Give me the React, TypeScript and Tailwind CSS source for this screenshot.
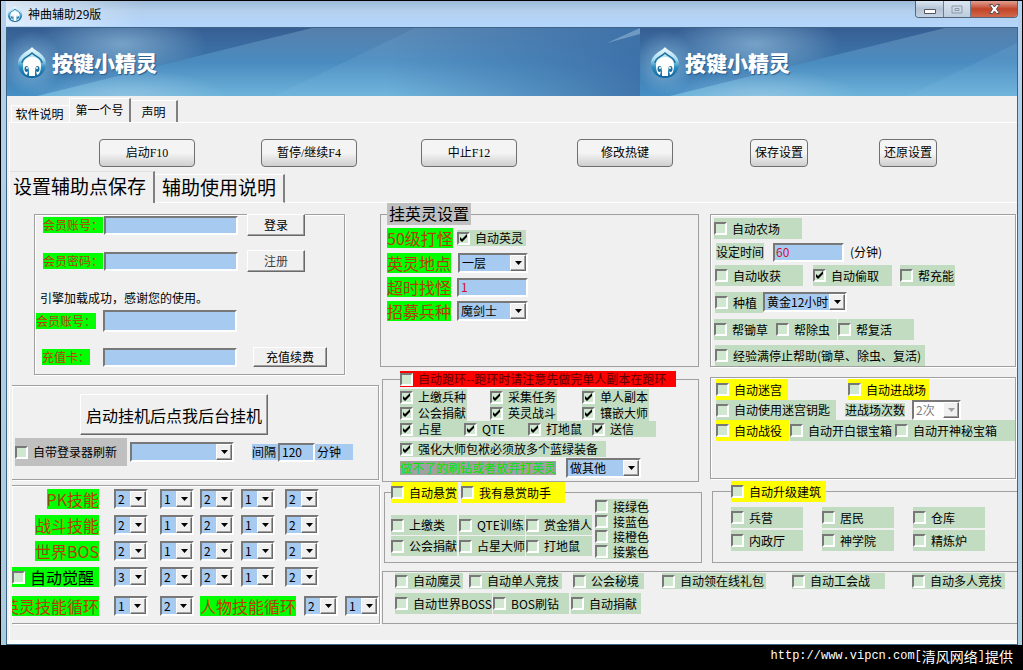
import type { ReactNode } from "react";
import { twMerge } from "tailwind-merge";

const sunken = "border-2 border-t-[#787878] border-l-[#787878] border-r-white border-b-white";
const raised =
  "border border-t-white border-l-white border-r-[#696969] border-b-[#696969] shadow-[inset_-1px_-1px_0_#a0a0a0]";
const etched = "border border-[#a0a0a0] shadow-[1px_1px_0_#fff,inset_1px_1px_0_#fff]";

function Check({
  children,
  checked = false,
  className = "",
}: {
  children: ReactNode;
  checked?: boolean;
  className?: string;
}) {
  return (
    <label
      className={twMerge(
        "flex h-[21px] shrink-0 items-center gap-[5px] bg-[#c2dcc2] text-xs leading-none whitespace-nowrap",
        className,
      )}
    >
      <span className="grid shrink-0">
        <input
          type="checkbox"
          defaultChecked={checked}
          className={`peer col-start-1 row-start-1 size-[13px] appearance-none bg-[#cfe8cf] ${sunken}`}
        />
        <svg
          viewBox="0 0 13 13"
          className="pointer-events-none invisible col-start-1 row-start-1 size-[13px] peer-checked:visible"
        >
          <path d="M3 5v3l2 2 5-5V2L5 7z" fill="#000" />
        </svg>
      </span>
      <span>{children}</span>
    </label>
  );
}

function Combo({
  label,
  options,
  value,
  disabled = false,
  className = "",
}: {
  label: string;
  options: string[];
  value?: string;
  disabled?: boolean;
  className?: string;
}) {
  return (
    <span className={twMerge("grid h-5 w-[34px] shrink-0", className)}>
      <select
        aria-label={label}
        defaultValue={value ?? options[0]}
        disabled={disabled}
        className={`col-start-1 row-start-1 w-full appearance-none bg-[#a6caf0] pl-0.5 text-xs leading-4 text-black disabled:bg-white disabled:text-[#808080] ${sunken}`}
      >
        {options.map((o) => (
          <option key={o}>{o}</option>
        ))}
      </select>
      <span
        className={`pointer-events-none col-start-1 row-start-1 m-0.5 flex w-4 items-center justify-center justify-self-end bg-[#f0f0f0] ${raised}`}
      >
        <svg viewBox="0 0 7 4" className="h-1 w-[7px]">
          <path d="M0 0h7L3.500 4z" fill={disabled ? "#a0a0a0" : "#000"} />
        </svg>
      </span>
    </span>
  );
}

function Field({ label, value = "", className = "" }: { label: string; value?: string; className?: string }) {
  return (
    <input
      aria-label={label}
      defaultValue={value}
      className={twMerge(`h-[19px] w-[134px] shrink-0 bg-[#a6caf0] px-0.5 text-xs leading-none ${sunken}`, className)}
    />
  );
}

function Tag({ children, className = "" }: { children: ReactNode; className?: string }) {
  return (
    <span
      className={twMerge(
        "flex h-5 w-fit shrink-0 items-center bg-[#00ff00] text-base leading-none whitespace-nowrap text-[#b83c00]",
        className,
      )}
    >
      {children}
    </span>
  );
}

function FlatButton({ children, className = "" }: { children: ReactNode; className?: string }) {
  return (
    <button
      className={twMerge(
        `h-[22px] w-[58px] shrink-0 bg-[#f0f0f0] text-xs leading-none whitespace-nowrap ${raised}`,
        className,
      )}
    >
      {children}
    </button>
  );
}

function Logo({ className }: { className: string }) {
  return (
    <svg viewBox="0 0 30 31" className={className}>
      <defs>
        <linearGradient id="logo-ring" x1="0" y1="0" x2="0" y2="1">
          <stop offset="0" stopColor="#f4fdff" />
          <stop offset="0.4" stopColor="#a5dcf0" />
          <stop offset="0.65" stopColor="#2e8fc0" />
          <stop offset="1" stopColor="#0d639b" />
        </linearGradient>
      </defs>
      <path d="M15 0C18 4 29 7 29 17c0 8-6 14-14 14S1 25 1 17C1 7 12 4 15 0z" fill="url(#logo-ring)" />
      <path d="M5 16c0-5 6-6 10-10 4 4 10 5 10 10" fill="none" stroke="#1d6f9f" strokeWidth="1.500" />
      <path
        d="M6 18c0-5 4-8 9-8s9 3 9 8c0 5-1 9-4 10l-1-4c-1-2-1-4-1-6h-6c0 2 0 4-1 6l-1 4c-3-1-4-5-4-10z"
        fill="#fff"
      />
      <path d="M12 15h6v14h-6z" fill="#fff" />
      <ellipse cx="9.500" cy="22" rx="2" ry="3" fill="#1b6f9d" />
      <ellipse cx="20.500" cy="22" rx="2" ry="3" fill="#1b6f9d" />
      <circle cx="10" cy="21" r="1" fill="#fff" />
      <circle cx="20" cy="21" r="1" fill="#fff" />
    </svg>
  );
}

function BannerTile() {
  return (
    <div className="grid h-[68px] w-[633px] shrink-0">
      <svg viewBox="0 0 633 68" preserveAspectRatio="none" className="col-start-1 row-start-1 h-full w-full">
        <defs>
          <linearGradient id="sky" x1="0" y1="0" x2="0" y2="1">
            <stop offset="0" stopColor="#365f94" />
            <stop offset="1" stopColor="#468fc5" />
          </linearGradient>
          <linearGradient id="beam" x1="0" y1="0" x2="0" y2="1">
            <stop offset="0" stopColor="#567fab" />
            <stop offset="0.5" stopColor="#4a8bbf" />
            <stop offset="1" stopColor="#6cb3da" />
          </linearGradient>
          <linearGradient id="dusk" x1="0" y1="0" x2="1" y2="0">
            <stop offset="0" stopColor="#3a6ea6" stopOpacity="0" />
            <stop offset="1" stopColor="#3a6ea6" stopOpacity="0.900" />
          </linearGradient>
          <radialGradient id="glow">
            <stop offset="0" stopColor="#a8cfe8" stopOpacity="0.550" />
            <stop offset="1" stopColor="#a8cfe8" stopOpacity="0" />
          </radialGradient>
        </defs>
        <path d="M0 0h633v68H0z" fill="url(#sky)" />
        <ellipse cx="115" cy="16" rx="85" ry="34" fill="url(#glow)" />
        <path d="M30 68L305 0H633v68z" fill="url(#beam)" />
        <path d="M267 68L408 0H633v68z" fill="#8cc4e8" opacity="0.150" />
        <path d="M380 0h253v68H380z" fill="url(#dusk)" />
        <path d="M600 15L633 0v6z" fill="#8fb4d4" opacity="0.600" />
        <ellipse cx="120" cy="68" rx="100" ry="26" fill="url(#glow)" />
        <ellipse cx="25" cy="35" rx="30" ry="32" fill="url(#glow)" />
      </svg>
      <div className="col-start-1 row-start-1 flex items-center gap-[5px] pl-2.5">
        <Logo className="h-[31px] w-[30px]" />
        <span className="text-[21px] leading-none font-black text-white [text-shadow:1px_1px_1px_#2b5a8a]">
          按键小精灵
        </span>
      </div>
    </div>
  );
}

function TitleBar() {
  return (
    <header className="flex h-[26px] items-start justify-between bg-linear-to-b from-[#9dbbd8] via-[#b4d0ee] via-40% to-[#b3d6fd]">
      <div className="flex h-[25px] items-center gap-[5px] bg-linear-to-r from-white/60 to-transparent pr-10 pl-px text-xs">
        <Logo className="h-4 w-4" />
        <span>神曲辅助29版</span>
      </div>
      <div className="flex h-[17px] overflow-hidden rounded-b border border-t-0 border-[#53657a]">
        <button
          aria-label="最小化"
          className="flex w-7 items-center justify-center border-r border-[#6b7c90] bg-linear-to-b from-[#dbe6f1] via-[#b3c3d5] via-50% to-[#c3d3e3]"
        >
          <svg viewBox="0 0 12 5" className="mt-1 h-[5px] w-3">
            <path d="M.5.5h11v4H.5z" fill="#fff" stroke="#54565c" />
          </svg>
        </button>
        <button
          aria-label="最大化"
          disabled
          className="flex w-[27px] items-center justify-center border-r border-[#6b7c90] bg-linear-to-b from-[#dbe6f1] to-[#bccddd]"
        >
          <svg viewBox="0 0 12 9" className="h-[9px] w-3">
            <path d="M1 1h10v7H1zM4 3.500h4v2H4z" fill="none" stroke="#8e9aa6" />
          </svg>
        </button>
        <button
          aria-label="关闭"
          className="flex w-[46px] items-center justify-center bg-linear-to-b from-[#e0a092] via-[#c04428] via-50% to-[#d2674c]"
        >
          <svg viewBox="0 0 11 10" className="h-2.5 w-[11px]">
            <path d="M.5.5h3l2 2.500 2-2.500h3L7.500 5l3 4.500h-3l-2-2.500-2 2.500h-3l3-4.500z" fill="#fff" stroke="#5a4a52" />
          </svg>
        </button>
      </div>
    </header>
  );
}

const skillRows = [
  { name: "PK技能", values: ["2", "1", "2", "1", "2"] },
  { name: "战斗技能", values: ["2", "1", "2", "1", "2"] },
  { name: "世界BOS", values: ["2", "1", "2", "1", "2"] },
  { name: "自动觉醒", values: ["3", "2", "2", "1", "2"], toggle: true },
];
const levels = ["1", "2", "3"];

function AccountPanel() {
  const small = "h-4 text-xs";
  return (
    <div className="flex w-[370px] shrink-0 flex-col">
      <section className={`mt-[11px] mr-[35px] ml-6 h-[161px] ${etched}`}>
        <div className="flex h-5 items-center">
          <div className="w-[69px] pl-2">
            <Tag className={small}>会员账号：</Tag>
          </div>
          <Field label="会员账号" />
          <FlatButton className="ml-[9px]">登录</FlatButton>
        </div>
        <div className="mt-[15px] flex h-[22px] items-center">
          <div className="w-[69px] pl-2">
            <Tag className={small}>会员密码：</Tag>
          </div>
          <Field label="会员密码" />
          <FlatButton className="ml-[9px] text-[#404040]">注册</FlatButton>
        </div>
        <p className="mt-[18px] pl-[5px] text-xs leading-4">引擎加载成功，感谢您的使用。</p>
        <div className="mt-1 flex h-[22px] items-center">
          <div className="w-[68px] pl-px">
            <Tag className={small}>会员账号：</Tag>
          </div>
          <Field label="充值会员账号" className="h-[22px]" />
        </div>
        <div className="mt-[15px] flex h-5 items-center">
          <div className="w-[68px] pl-[7px]">
            <Tag className={small}>充值卡：</Tag>
          </div>
          <Field label="充值卡" />
          <FlatButton className="ml-4 h-5 w-[74px]">充值续费</FlatButton>
        </div>
      </section>

      <section className={`mt-2.5 mr-px ml-0.5 h-[95px] border-l-0 ${etched}`}>
        <FlatButton className="mt-2 ml-[68px] block h-[41px] w-[188px] text-base leading-none">
          启动挂机后点我后台挂机
        </FlatButton>
        <div className="mt-[3px] flex h-7 items-center pl-[3px]">
          <Check className="h-7 w-[112px] bg-[#c0c0c0]">自带登录器刷新</Check>
          <Combo label="登录器" options={[""]} className="ml-[3px] w-[104px]" />
          <label htmlFor="interval" className="ml-[18px] w-[26px] bg-[#a6caf0] text-xs leading-4">
            间隔
          </label>
          <input
            id="interval"
            defaultValue="120"
            className={`h-[19px] w-[37px] bg-[#a6caf0] pb-0.5 pl-0.5 text-xs leading-none ${sunken}`}
          />
          <span className="w-[38px] bg-[#a6caf0] pl-0.5 text-xs leading-4">分钟</span>
        </div>
      </section>

      <section className={`mt-[5px] ml-0.5 h-[139px] border-l-0 ${etched}`}>
        {skillRows.map((row) => (
          <div key={row.name} className="flex h-[26px] items-center">
            <div className="flex w-[102px] justify-end pr-[15px]">
              {row.toggle ? (
                <Check className="h-5 w-full bg-[#00ff00] text-base leading-none">{row.name}</Check>
              ) : (
                <Tag>{row.name}</Tag>
              )}
            </div>
            <div className="grid grid-cols-[46px_40px_41px_44px_34px]">
              {row.values.map((v, i) => (
                <Combo key={i} label={`${row.name} ${i + 1}`} options={levels} value={v} />
              ))}
            </div>
          </div>
        ))}
        <div className="mt-1.5 flex h-5 items-center">
          <div className="flex w-[87px] justify-end overflow-hidden">
            <Tag>英灵技能循环</Tag>
          </div>
          <Combo label="英灵技能循环 1" options={levels} value="1" className="ml-[15px]" />
          <Combo label="英灵技能循环 2" options={levels} value="2" className="ml-3" />
          <Tag className="ml-1.5">人物技能循环</Tag>
          <Combo label="人物技能循环 1" options={levels} value="2" className="ml-2" />
          <Combo label="人物技能循环 2" options={levels} value="1" className="ml-[7px]" />
        </div>
      </section>
    </div>
  );
}

function HeroPanel() {
  return (
    <div className="flex w-[330px] shrink-0 flex-col">
      <fieldset className="mr-[11px] h-[164px] border border-[#a0a0a0] pl-1.5">
        <legend className="h-[22px] w-[84px] bg-[#c0c0c0] pl-0.5 text-base leading-5">挂英灵设置</legend>
        <div className="mt-[3px] flex h-5 items-center">
          <div className="w-[70px]">
            <Tag>50级打怪</Tag>
          </div>
          <Check checked className="h-4 w-[69px]">
            自动英灵
          </Check>
        </div>
        <div className="mt-[5px] flex h-5 items-center">
          <div className="w-[71px]">
            <Tag>英灵地点</Tag>
          </div>
          <Combo label="英灵地点" options={["一层", "二层", "三层"]} className="w-[70px]" />
        </div>
        <div className="mt-1 flex h-5 items-center">
          <div className="w-[70px]">
            <Tag>超时找怪</Tag>
          </div>
          <Field label="超时找怪" value="1" className="w-[71px] pb-0.5 text-[#d01030]" />
        </div>
        <div className="mt-1 flex h-5 items-center">
          <div className="w-[70px]">
            <Tag>招募兵种</Tag>
          </div>
          <Combo label="招募兵种" options={["魔剑士"]} className="w-[71px]" />
        </div>
      </fieldset>

      <fieldset className="mt-1 mr-[11px] ml-0.5 h-[111px] border border-[#a0a0a0] pl-[17px]">
        <legend>
          <Check className="h-4 w-[276px] bg-[#ff0000] text-[#5a0000]">
            自动跑环--跑环时请注意先做完单人副本在跑环
          </Check>
        </legend>
        <div className="mt-0.5 grid grid-cols-[90px_92px_68px]">
          {["上缴兵种", "采集任务", "单人副本", "公会捐献", "英灵战斗", "镶嵌大师"].map((name) => (
            <Check key={name} checked className="h-4 w-[67px]">
              {name}
            </Check>
          ))}
        </div>
        <div className="flex w-[256px]">
          {["占星", "QTE", "打地鼠", "送信"].map((name) => (
            <Check key={name} checked className="h-4 w-16">
              {name}
            </Check>
          ))}
        </div>
        <Check checked className="mt-1 h-4 w-[206px]">
          强化大师包袱必须放多个蓝绿装备
        </Check>
        <div className="mt-px flex h-5 items-center gap-2.5">
          <span className="bg-[#a0a0a0] text-xs leading-[14px] text-[#00e600]">做不了的刷钻或者放弃打英灵</span>
          <Combo label="做不了时" options={["做其他"]} className="w-[75px]" />
        </div>
      </fieldset>

      <fieldset className="mr-2 ml-1 h-[81px] border border-[#a0a0a0] pl-1.5">
        <legend className="flex gap-[3px]">
          <Check className="w-[67px] bg-[#ffff00]">自动悬赏</Check>
          <Check className="w-[104px] bg-[#ffff00]">我有悬赏助手</Check>
        </legend>
        <div className="-mt-1 flex items-end gap-[3px]">
          <div className="grid grid-cols-[68px_67px_66px] gap-y-px pb-[3px]">
            {["上缴类", "QTE训练", "赏金猎人", "公会捐献", "占星大师", "打地鼠"].map((name) => (
              <Check key={name} className="h-5 w-[66px]">
                {name}
              </Check>
            ))}
          </div>
          <div className="flex flex-col">
            {["接绿色", "接蓝色", "接橙色", "接紫色"].map((name) => (
              <Check key={name} className="h-[15px] w-[53px]">
                {name}
              </Check>
            ))}
          </div>
        </div>
      </fieldset>
    </div>
  );
}

function FarmPanel() {
  return (
    <div className="flex flex-1 flex-col">
      <section className={`mt-[11px] mr-px h-[153px] pl-[3px] ${etched}`}>
        <Check className="mt-[3px] w-[88px]">自动农场</Check>
        <div className="mt-[3px] flex h-5 items-center text-xs">
          <label htmlFor="minutes" className="ml-0.5 w-[57px] leading-[14px]">
            <span className="bg-[#c2dcc2]">设定时间</span>
          </label>
          <input
            id="minutes"
            defaultValue="60"
            className={`h-[19px] w-[71px] bg-[#a6caf0] pb-0.5 pl-px leading-none text-[#d01030] ${sunken}`}
          />
          <span className="ml-1.5">(分钟)</span>
        </div>
        <div className="mt-[3px] ml-px flex">
          <Check className="w-[88px]">自动收获</Check>
          <Check checked className="ml-2.5 w-[79px]">
            自动偷取
          </Check>
          <Check className="ml-2 w-[55px]">帮充能</Check>
        </div>
        <div className="mt-1.5 ml-px flex">
          <Check className="w-12">种植</Check>
          <Combo label="种植" options={["黄金12小时"]} className="w-[84px]" />
        </div>
        <div className="mt-1.5 flex">
          <Check className="w-[62px]">帮锄草</Check>
          <Check className="w-[61px]">帮除虫</Check>
          <Check className="ml-px w-[76px]">帮复活</Check>
        </div>
        <Check className="mt-[5px] ml-px w-[210px]">经验满停止帮助(锄草、除虫、复活)</Check>
      </section>

      <section className={`mt-2.5 mr-px h-[102px] pl-[5px] ${etched}`}>
        <div className="mt-px flex">
          <Check className="w-[72px] bg-[#ffff00]">自动迷宫</Check>
          <Check className="ml-[60px] w-[81px] bg-[#ffff00]">自动进战场</Check>
        </div>
        <div className="flex h-5 items-center">
          <Check className="h-5 w-[120px]">自动使用迷宫钥匙</Check>
          <span className="ml-[9px] bg-[#c2dcc2] text-xs leading-[14px]">进战场次数</span>
          <Combo label="进战场次数" options={["2次"]} disabled className="ml-[7px] w-[49px]" />
        </div>
        <div className="flex">
          <Check className="w-[73px] bg-[#ffff00]">自动战役</Check>
          <Check className="ml-px w-[105px]">自动开白银宝箱</Check>
          <Check className="w-auto flex-1">自动开神秘宝箱</Check>
        </div>
      </section>

      <fieldset className="mt-0.5 ml-0.5 h-[82px] border border-r-0 border-[#a0a0a0] pl-[18px]">
        <legend>
          <Check className="w-[95px] bg-[#ffff00]">自动升级建筑</Check>
        </legend>
        <div className="mt-[5px] grid grid-cols-[91px_91px_72px] gap-y-0.5">
          {["兵营", "居民", "仓库", "内政厅", "神学院", "精炼炉"].map((name) => (
            <Check key={name} className="w-[72px]">
              {name}
            </Check>
          ))}
        </div>
      </fieldset>
    </div>
  );
}

export default function App() {
  return (
    <div className="flex min-h-screen flex-col bg-black font-['Noto_Sans_CJK_SC','Noto_Sans',sans-serif] text-black">
      <div className="border-x border-t border-black bg-linear-to-b from-[#b3d0ee] to-[#a9cde0] pr-1 pl-[5px]">
        <TitleBar />
        <main className="border border-[#3f6484] bg-[#f0f0f0]">
          <div className="flex overflow-hidden">
            <BannerTile />
            <BannerTile />
          </div>

          <nav className="flex h-[26px] items-end pl-1 text-xs leading-none">
            <button className="h-[17px] w-[58px] border-t border-l border-white pr-0.5 whitespace-nowrap">
              软件说明
            </button>
            <button className="h-6 w-[62px] border-t border-r-2 border-l border-t-white border-r-[#808080] border-l-white pb-0.5 whitespace-nowrap">
              第一个号
            </button>
            <button className="h-[22px] w-[47px] border-t border-r-2 border-t-white border-r-[#808080] whitespace-nowrap">
              声明
            </button>
          </nav>

          <div className="ml-0.5 border-t border-l border-white pb-4">
            <div className="flex pt-4 pl-[89px] font-['Liberation_Serif','Noto_Sans_CJK_SC',serif] text-xs [&>button]:h-7 [&>button]:shrink-0 [&>button]:rounded-sm [&>button]:border [&>button]:border-[#707070] [&>button]:bg-linear-to-b [&>button]:from-[#f4f4f4] [&>button]:from-50% [&>button]:to-[#cfcfcf]">
              <button className="w-24">启动F10</button>
              <button className="ml-[66px] w-24">暂停/继续F4</button>
              <button className="ml-16 w-24">中止F12</button>
              <button className="ml-[60px] w-24">修改热键</button>
              <button className="ml-[77px] w-[58px]">保存设置</button>
              <button className="ml-[71px] w-[58px]">还原设置</button>
            </div>

            <nav className="mt-1 flex h-8 items-end text-[19px] leading-none">
              <button className="flex h-8 w-[145px] items-center justify-end border-t border-r-2 border-t-[#e0e0e0] border-r-[#808080] pr-[7px] pb-1 whitespace-nowrap">
                设置辅助点保存
              </button>
              <button className="h-[29px] w-[130px] border-t border-r-2 border-b border-white border-r-[#808080] pb-1 whitespace-nowrap">
                辅助使用说明
              </button>
              <div className="flex-1 border-b border-white" />
            </nav>

            <div className="flex">
              <AccountPanel />
              <div className="flex flex-1 flex-col">
                <div className="flex">
                  <HeroPanel />
                  <FarmPanel />
                </div>
                <section className="mt-2 ml-0.5 h-[53px] border border-r-0 border-[#a0a0a0] pl-3">
                  <div className="mt-px flex [&>label]:h-4">
                    <Check className="w-[68px]">自动魔灵</Check>
                    <Check className="ml-1.5 w-[93px]">自动单人竞技</Check>
                    <Check className="ml-[11px] w-[71px]">公会秘境</Check>
                    <Check className="ml-[18px] w-[104px]">自动领在线礼包</Check>
                    <Check className="ml-[26px] w-[93px]">自动工会战</Check>
                    <Check className="ml-[27px] w-[93px]">自动多人竞技</Check>
                  </div>
                  <div className="mt-1 flex">
                    <Check className="w-[97px]">自动世界BOSS</Check>
                    <Check className="ml-px w-[76px]">BOS刷钻</Check>
                    <Check className="ml-0.5 w-[70px]">自动捐献</Check>
                  </div>
                </section>
              </div>
            </div>
          </div>
          <div className="h-1 bg-white" />
        </main>
      </div>
      <footer className="flex flex-1 items-center justify-end pr-2.5 pb-1 text-sm leading-none text-white">
        <a href="http://www.vipcn.com" className="flex items-center">
          <span className="font-['Liberation_Mono',monospace] text-xs">http://www.vipcn.com[</span>
          清风网络
          <span className="font-['Liberation_Mono',monospace] text-xs">]</span>
          提供
        </a>
      </footer>
    </div>
  );
}
